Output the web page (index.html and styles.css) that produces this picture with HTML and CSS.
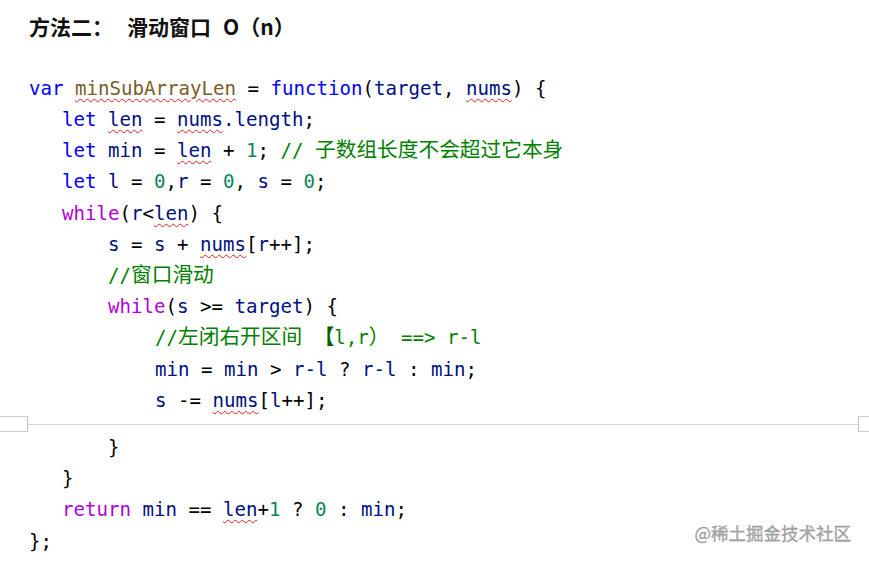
FILE: index.html
```html
<!DOCTYPE html>
<html lang="zh">
<head>
<meta charset="utf-8">
<link rel="stylesheet" href="styles.css">
</head>
<body>
<div class="doc">
  <div class="title">方法二：<span class="gap"></span>滑动窗口<span class="gap2"></span>O（n）</div>
  <div class="ln"></div>
  <div class="ln i0"><span class="k">var</span> <span class="fn u">minSubArrayLen</span> <span class="op">=</span> <span class="k">function</span><span class="op">(</span><span class="v">target</span><span class="op">,</span> <span class="v u">nums</span><span class="op">)</span> <span class="op">{</span></div>
  <div class="ln i1"><span class="k">let</span> <span class="v u">len</span> <span class="op">=</span> <span class="v u">nums</span><span class="v">.length</span><span class="op">;</span></div>
  <div class="ln i1"><span class="k">let</span> <span class="v">min</span> <span class="op">=</span> <span class="v u">len</span> <span class="op">+</span> <span class="n">1</span><span class="op">;</span> <span class="c">// <span class="cj">子数组长度不会超过它本身</span></span></div>
  <div class="ln i1"><span class="k">let</span> <span class="v">l</span> <span class="op">=</span> <span class="n">0</span><span class="op">,</span><span class="v">r</span> <span class="op">=</span> <span class="n">0</span><span class="op">,</span> <span class="v">s</span> <span class="op">=</span> <span class="n">0</span><span class="op">;</span></div>
  <div class="ln i1"><span class="kw">while</span><span class="op">(</span><span class="v">r</span><span class="op">&lt;</span><span class="v u">len</span><span class="op">)</span> <span class="op">{</span></div>
  <div class="ln i2"><span class="v">s</span> <span class="op">=</span> <span class="v">s</span> <span class="op">+</span> <span class="v u">nums</span><span class="op">[</span><span class="v">r</span><span class="op">++];</span></div>
  <div class="ln i2"><span class="c">//<span class="cj">窗口滑动</span></span></div>
  <div class="ln i2"><span class="kw">while</span><span class="op">(</span><span class="v">s</span> <span class="op">&gt;=</span> <span class="v">target</span><span class="op">)</span> <span class="op">{</span></div>
  <div class="ln i3"><span class="c">//<span class="cj">左闭右开区间</span> <span class="cj br">【</span>l,r<span class="cj">）</span> ==&gt; r-l</span></div>
  <div class="ln i3"><span class="v">min</span> <span class="op">=</span> <span class="v">min</span> <span class="op">&gt;</span> <span class="v">r-l</span> <span class="op">?</span> <span class="v">r-l</span> <span class="op">:</span> <span class="v">min</span><span class="op">;</span></div>
  <div class="ln i3"><span class="v">s</span> <span class="op">-=</span> <span class="v u">nums</span><span class="op">[</span><span class="v">l</span><span class="op">++];</span></div>
  <div class="pgbreak"><span class="pb-l"></span><span class="pb-m"></span><span class="pb-r"></span></div>
  <div class="ln i2"><span class="op">}</span></div>
  <div class="ln i1"><span class="op">}</span></div>
  <div class="ln i1"><span class="kw">return</span> <span class="v">min</span> <span class="op">==</span> <span class="v u">len</span><span class="op">+</span><span class="n">1</span> <span class="op">?</span> <span class="n">0</span> <span class="op">:</span> <span class="v">min</span><span class="op">;</span></div>
  <div class="ln i0"><span class="op">};</span></div>
</div>
<div class="mark">@稀土掘金技术社区</div>
</body>
</html>
```
FILE: styles.css
```css
html, body {
  margin: 0;
  padding: 0;
  background: #ffffff;
}
body {
  width: 869px;
  height: 561px;
  overflow: hidden;
  position: relative;
}
.doc {
  padding-top: 10.5px;
}
.title {
  padding-left: 29px;
  height: 31.2px;
  line-height: 31.2px;
  font-family: "Noto Sans CJK SC", "Noto Sans", sans-serif;
  font-weight: 700;
  font-size: 21px;
  color: #111111;
  white-space: pre;
}
.gap { display: inline-block; width: 14px; }
.gap2 { display: inline-block; width: 12px; }
.ln {
  height: 31.2px;
  line-height: 31.2px;
  font-family: "DejaVu Sans Mono", "Liberation Mono", monospace;
  font-size: 19.1px;
  white-space: pre;
  color: #000000;
}
.i0 { padding-left: 29px; }
.i1 { padding-left: 62px; }
.i2 { padding-left: 108px; }
.i3 { padding-left: 155px; }
.k { color: #0000ff; }
.kw { color: #af00db; }
.fn { color: #795e26; }
.v { color: #001080; }
.n { color: #098658; }
.op { color: #000000; }
.c { color: #008000; }
.cj {
  font-family: "Noto Sans CJK SC", sans-serif;
  font-size: 20.7px;
  line-height: 1;
  font-weight: 400;
}
.br { font-weight: 700; color: #006400; }
.u {
  text-decoration: underline wavy #e02020;
  text-decoration-thickness: 1px;
  text-underline-offset: 3px;
}
.pgbreak {
  display: flex;
  height: 16px;
}
.pb-l {
  width: 28px;
  box-sizing: border-box;
  border-top: 1px solid #cfcfcf;
  border-bottom: 1px solid #cfcfcf;
  border-right: 1px solid #bdbdbd;
}
.pb-m {
  flex: 1;
  height: 8px;
  border-bottom: 1px solid #d4d4d4;
}
.pb-r {
  width: 11px;
  box-sizing: border-box;
  border-top: 1px solid #cfcfcf;
  border-bottom: 1px solid #cfcfcf;
  border-left: 1px solid #bdbdbd;
}
.mark {
  position: absolute;
  right: 18px;
  top: 521px;
  font-family: "Noto Sans CJK SC", sans-serif;
  font-size: 17.5px;
  line-height: 24px;
  color: #a8a8a8;
  -webkit-text-stroke: 0.3px #909090;
}
```
